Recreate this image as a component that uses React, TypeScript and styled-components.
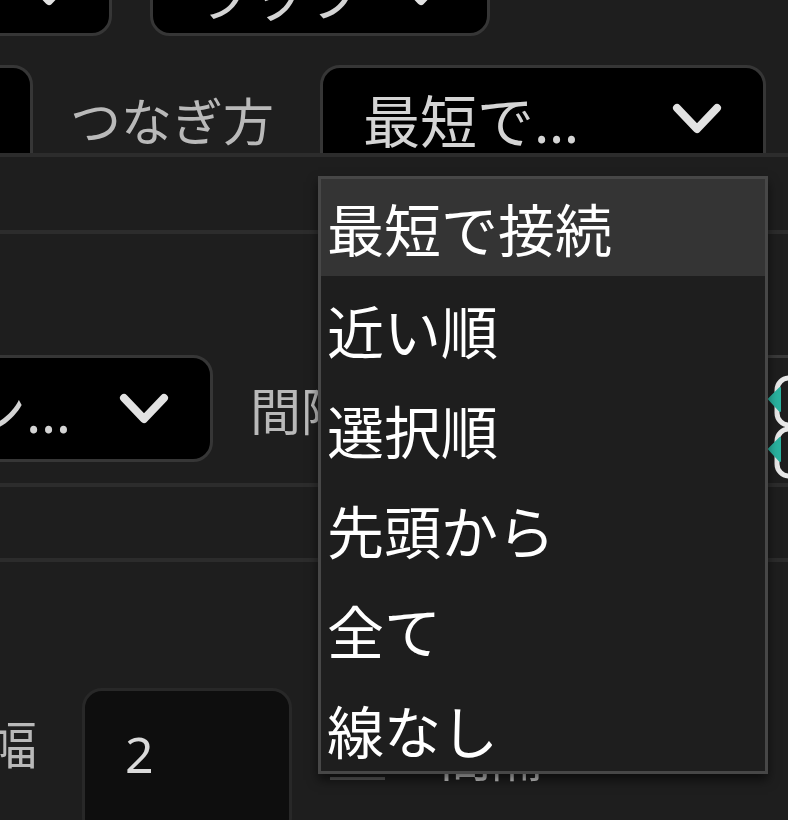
import React from 'react'
import styled, { createGlobalStyle } from 'styled-components'

const GlobalStyle = createGlobalStyle`
  html, body {
    margin: 0;
    padding: 0;
    background: #1e1e1e;
  }
  body {
    font-family: "Noto Sans", "Noto Sans CJK JP", sans-serif;
  }
`

const Panel = styled.div`
  position: relative;
  width: 788px;
  height: 820px;
  overflow: hidden;
  background: #1e1e1e;
  display: flex;
  flex-direction: column;
`

const Row = styled.div<{ $h: number; $pt?: number; $mt?: number; $clip?: boolean }>`
  flex: none;
  display: flex;
  align-items: flex-start;
  box-sizing: border-box;
  height: ${p => p.$h}px;
  padding-top: ${p => p.$pt ?? 0}px;
  margin-top: ${p => p.$mt ?? 0}px;
  overflow: ${p => (p.$clip ? 'hidden' : 'visible')};
`

const Divider = styled.div`
  flex: none;
  height: 4px;
  background: #2c2c2c;
`

const Select = styled.div<{ $w: number; $ml: number; $h?: number; $pr?: number }>`
  flex: none;
  box-sizing: border-box;
  width: ${p => p.$w}px;
  height: ${p => p.$h ?? 107}px;
  margin-left: ${p => p.$ml}px;
  display: flex;
  align-items: center;
  justify-content: space-between;
  padding: 0 ${p => p.$pr ?? 40}px 0 40px;
  background: #000;
  border: 3px solid #363636;
  border-radius: 20px;
  color: #d4d4d4;
  font-size: 57px;
`

const SelectText = styled.span<{ $w: number }>`
  display: block;
  width: ${p => p.$w}px;
  overflow: hidden;
  white-space: nowrap;
  text-overflow: ellipsis;
`

const Label = styled.div<{ $w?: number; $ml: number }>`
  flex: none;
  width: ${p => (p.$w ? `${p.$w}px` : 'auto')};
  margin-left: ${p => p.$ml}px;
  height: 107px;
  display: flex;
  align-items: center;
  color: #b9b9b9;
  font-size: 51px;
  white-space: nowrap;
`

const NumberInput = styled.div<{ $ml: number }>`
  flex: none;
  box-sizing: border-box;
  width: 210px;
  height: 150px;
  margin-left: ${p => p.$ml}px;
  padding: 29px 40px 0;
  display: flex;
  align-items: flex-start;
  background: #0e0e0e;
  border: 3px solid #282828;
  border-radius: 20px;
  color: #dadada;
  font-size: 50px;
`

const Swatch = styled.div`
  flex: none;
  width: 55px;
  height: 40px;
  margin-left: 38px;
  margin-top: 52px;
  box-sizing: border-box;
  border-bottom: 3px solid #5c5c5c;
`

const SideText = styled.div`
  flex: none;
  margin-left: 55px;
  margin-top: 30px;
  color: #c8c8c8;
  font-size: 51px;
  white-space: nowrap;
`

const IconStack = styled.div`
  flex: none;
  margin-left: auto;
  margin-right: -60px;
  width: 82px;
  height: 128px;
  box-sizing: border-box;
  border-top: 3px solid #3a3a3a;
`

const Menu = styled.div`
  position: absolute;
  left: 318px;
  top: 176px;
  width: 450px;
  height: 598px;
  box-sizing: border-box;
  overflow: hidden;
  background: #1e1e1e;
  border: 3px solid #474747;
  box-shadow: 0 6px 10px rgba(0, 0, 0, 0.55);
  display: flex;
  flex-direction: column;
`

const MenuItem = styled.div<{ $active?: boolean }>`
  flex: none;
  height: 100px;
  display: flex;
  align-items: center;
  padding-left: 6px;
  color: #ffffff;
  font-size: 57px;
  background: ${p => (p.$active ? '#343434' : 'transparent')};

  &:first-child {
    height: 97px;
    margin-bottom: 3px;
  }
`

const Chevron = () => (
  <svg width="52" height="34" viewBox="0 0 52 34">
    <path
      d="M6 6 L26 27 L46 6"
      fill="none"
      stroke="#e2e2e2"
      strokeWidth="8"
      strokeLinecap="round"
      strokeLinejoin="round"
    />
  </svg>
)

const StackIcons = () => (
  <svg width="60" height="125" viewBox="0 0 60 125">
    <rect x="11" y="20" width="46" height="47" rx="12" fill="none" stroke="#e8e8e8" strokeWidth="5" />
    <path d="M3 41 L14 30 L14 53 Z" fill="#2ab3a0" stroke="#2ab3a0" strokeWidth="2" strokeLinejoin="round" />
    <rect x="11" y="71" width="46" height="47" rx="12" fill="none" stroke="#e8e8e8" strokeWidth="5" />
    <path d="M3 91 L14 80 L14 103 Z" fill="#2ab3a0" stroke="#2ab3a0" strokeWidth="2" strokeLinejoin="round" />
  </svg>
)

const options = ['最短で接続', '近い順', '選択順', '先頭から', '全て', '線なし']

export default function App() {
  return (
    <>
      <GlobalStyle />
      <Panel>
        <Row $h={90} $mt={-54}>
          <Select $w={150} $ml={-38} $h={90} $pr={34}>
            <span />
            <Chevron />
          </Select>
          <Select $w={340} $ml={38} $h={90}>
            <SelectText $w={200}>ラップ</SelectText>
            <Chevron />
          </Select>
        </Row>

        <Row $h={88} $mt={29} $clip>
          <Select $w={133} $ml={-100} />
          <Label $ml={37} $w={250}>つなぎ方</Label>
          <Select $w={446} $ml={0}>
            <SelectText $w={222}>最短で接続</SelectText>
            <Chevron />
          </Select>
        </Row>
        <Divider />

        <Row $h={73} />
        <Divider />

        <Row $h={249} $pt={121}>
          <Select $w={515} $ml={-302}>
            <SelectText $w={333}>スプライン曲線</SelectText>
            <Chevron />
          </Select>
          <Label $ml={37}>間隔</Label>
          <IconStack>
            <StackIcons />
          </IconStack>
        </Row>
        <Divider />

        <Row $h={71} />
        <Divider />

        <Row $h={258} $pt={126}>
          <Label $ml={-65} $w={102}>線幅</Label>
          <NumberInput $ml={45}>2</NumberInput>
          <Swatch />
          <SideText>間隔</SideText>
        </Row>

        <Menu>
          {options.map((o, i) => (
            <MenuItem key={o} $active={i === 0}>
              {o}
            </MenuItem>
          ))}
        </Menu>
      </Panel>
    </>
  )
}
